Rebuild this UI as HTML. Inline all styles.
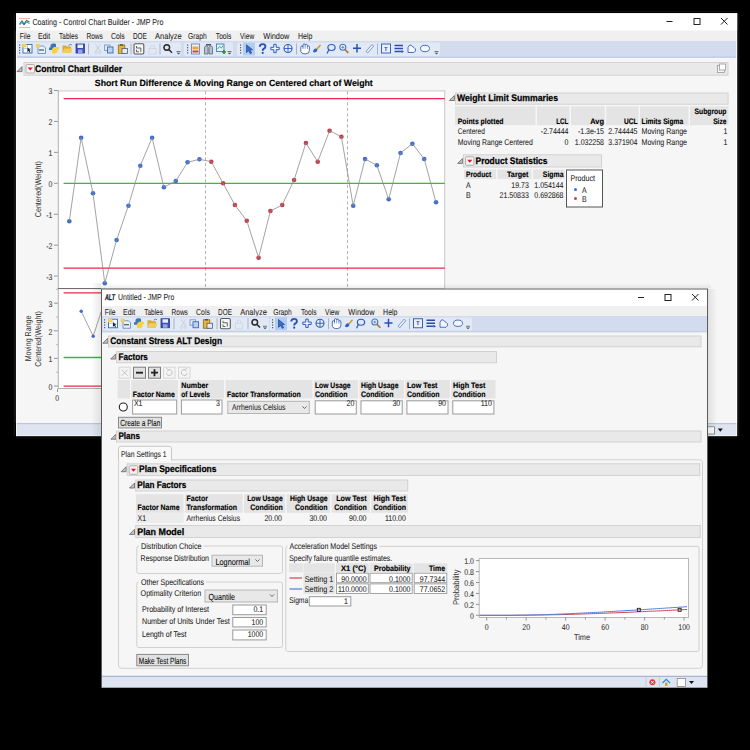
<!DOCTYPE html>
<html><head><meta charset="utf-8"><style>
html,body{margin:0;padding:0;background:#000;width:750px;height:750px;overflow:hidden}
svg{display:block}
text{font-family:"Liberation Sans",sans-serif;text-rendering:geometricPrecision}
</style></head><body>
<svg width="750" height="750" viewBox="0 0 750 750">
<rect x="0" y="0" width="750" height="750" fill="#000"/>
<rect x="16" y="13.2" width="721.2" height="423.0" fill="#f6f6f6"/>
<rect x="16" y="13.2" width="721.2" height="17.2" fill="#ffffff"/>
<line x1="14.3" y1="14" x2="14.3" y2="436" stroke="#1e1e1e" stroke-width="0.8"/>
<line x1="738.8" y1="14" x2="738.8" y2="436" stroke="#1e1e1e" stroke-width="0.8"/>
<line x1="16" y1="11.5" x2="737" y2="11.5" stroke="#151515" stroke-width="0.8"/>
<line x1="16" y1="438" x2="737" y2="438" stroke="#151515" stroke-width="0.8"/>
<line x1="16.4" y1="31" x2="16.4" y2="423" stroke="#ffffff" stroke-width="0.8"/>
<line x1="736.6" y1="31" x2="736.6" y2="423" stroke="#ffffff" stroke-width="0.8"/>
<path d="M19,18.5 L30,18.5 M19,27.5 L30,27.5" stroke="#f0a0a0" stroke-width="0.8"/>
<path d="M19.5,24 L22,21 L24,24 L26.5,20.5 L29.5,22" stroke="#1b8f3a" stroke-width="1.1" fill="none"/>
<path d="M19.5,25 L22,22.5 L24,25 L26.5,22 L29.5,23.5" stroke="#2a5cc0" stroke-width="0.9" fill="none"/>
<text x="32.40" y="25.00" font-size="8.6" textLength="131.00" lengthAdjust="spacingAndGlyphs" stroke="#1e1e1e" stroke-width="0.06" fill="#1e1e1e">Coating - Control Chart Builder - JMP Pro</text>
<line x1="666.5" y1="21.5" x2="672.5" y2="21.5" stroke="#222" stroke-width="1"/>
<rect x="694.0" y="18.5" width="6" height="6" fill="none" stroke="#222" stroke-width="1"/>
<path d="M721,18 L727.5,24.5 M727.5,18 L721,24.5" stroke="#222" stroke-width="1"/>
<rect x="17" y="30.7" width="719.2" height="10.2" fill="#f0f0f0"/>
<text x="19.70" y="39.40" font-size="8.6" textLength="10.70" lengthAdjust="spacingAndGlyphs" stroke="#1e1e1e" stroke-width="0.06" fill="#1e1e1e">File</text>
<text x="38.00" y="39.40" font-size="8.6" textLength="12.20" lengthAdjust="spacingAndGlyphs" stroke="#1e1e1e" stroke-width="0.06" fill="#1e1e1e">Edit</text>
<text x="59.10" y="39.40" font-size="8.6" textLength="18.80" lengthAdjust="spacingAndGlyphs" stroke="#1e1e1e" stroke-width="0.06" fill="#1e1e1e">Tables</text>
<text x="86.40" y="39.40" font-size="8.6" textLength="16.40" lengthAdjust="spacingAndGlyphs" stroke="#1e1e1e" stroke-width="0.06" fill="#1e1e1e">Rows</text>
<text x="111.00" y="39.40" font-size="8.6" textLength="13.80" lengthAdjust="spacingAndGlyphs" stroke="#1e1e1e" stroke-width="0.06" fill="#1e1e1e">Cols</text>
<text x="133.00" y="39.40" font-size="8.6" textLength="13.80" lengthAdjust="spacingAndGlyphs" stroke="#1e1e1e" stroke-width="0.06" fill="#1e1e1e">DOE</text>
<text x="155.10" y="39.40" font-size="8.6" textLength="26.60" lengthAdjust="spacingAndGlyphs" stroke="#1e1e1e" stroke-width="0.06" fill="#1e1e1e">Analyze</text>
<text x="188.10" y="39.40" font-size="8.6" textLength="18.60" lengthAdjust="spacingAndGlyphs" stroke="#1e1e1e" stroke-width="0.06" fill="#1e1e1e">Graph</text>
<text x="215.80" y="39.40" font-size="8.6" textLength="15.60" lengthAdjust="spacingAndGlyphs" stroke="#1e1e1e" stroke-width="0.06" fill="#1e1e1e">Tools</text>
<text x="240.00" y="39.40" font-size="8.6" textLength="14.20" lengthAdjust="spacingAndGlyphs" stroke="#1e1e1e" stroke-width="0.06" fill="#1e1e1e">View</text>
<text x="263.20" y="39.40" font-size="8.6" textLength="26.20" lengthAdjust="spacingAndGlyphs" stroke="#1e1e1e" stroke-width="0.06" fill="#1e1e1e">Window</text>
<text x="298.00" y="39.40" font-size="8.6" textLength="14.40" lengthAdjust="spacingAndGlyphs" stroke="#1e1e1e" stroke-width="0.06" fill="#1e1e1e">Help</text>
<rect x="17" y="40.9" width="719.2" height="16.3" fill="#d3dbef"/>
<line x1="17" y1="57.2" x2="736.2" y2="57.2" stroke="#b3c1de" stroke-width="1"/>
<rect x="17" y="42.5" width="164" height="13.5" fill="#e2e9f6" rx="2"/>
<rect x="184" y="42.5" width="49" height="13.5" fill="#e2e9f6" rx="2"/>
<rect x="237" y="42.5" width="203" height="13.5" fill="#e2e9f6" rx="2"/>
<rect x="16" y="41" width="0" height="0" fill="none"/>
<rect x="19" y="44.5" width="1.2" height="1.2" fill="#555"/>
<rect x="19" y="47.1" width="1.2" height="1.2" fill="#555"/>
<rect x="19" y="49.7" width="1.2" height="1.2" fill="#555"/>
<rect x="19" y="52.3" width="1.2" height="1.2" fill="#555"/>
<rect x="23.0" y="44.5" width="9" height="8.5" fill="#ffffff" stroke="#3a78c0" stroke-width="1"/>
<line x1="23.5" y1="48.5" x2="31.5" y2="48.5" stroke="#9dbde3" stroke-width="0.7"/>
<line x1="27.5" y1="45.0" x2="27.5" y2="52.5" stroke="#9dbde3" stroke-width="0.7"/>
<rect x="22.5" y="44.0" width="4" height="3.5" fill="#f3d25e"/>
<path d="M27.5,47.5 L27.5,52.0 L28.7,50.9 L29.9,52.7 L30.5,52.3 L29.5,50.5 L30.9,50.3 Z" fill="#222"/>
<path d="M38.0,46.0 L43.5,46.0 L45.5,48.0 L45.5,53.5 L38.0,53.5 Z" fill="#e8f0fa" stroke="#6a8fbf" stroke-width="0.9"/>
<rect x="35.8" y="44.0" width="4" height="3.5" fill="#f2cf62"/>
<line x1="39.0" y1="50.0" x2="44.0" y2="50.0" stroke="#444" stroke-width="1.1"/>
<path d="M54,43.5 C50,43.5 50.5,45.5 50.5,47.5 L49,47.5 L49,50.0 L54,50.0 L56,48.0 L56,44.5 C56,43.5 55,43.5 54,43.5 Z" fill="#3b77b6"/>
<path d="M54,53.5 C58,53.5 57.5,51.5 57.5,49.5 L59,49.5 L59,47.0 L54,47.0 L52,49.0 L52,52.5 C52,53.5 53,53.5 54,53.5 Z" fill="#f7d23d"/>
<path d="M62.5,45.5 L66.0,45.5 L67.0,46.5 L71.0,46.5 L71.0,53.0 L62.5,53.0 Z" fill="#d9a93a"/>
<path d="M64.0,48.5 L72.5,48.5 L71.0,53.0 L62.5,53.0 Z" fill="#f3cd5c"/>
<path d="M68.5,45.5 Q70.5,43.5 72.0,45.0" stroke="#4b7bc0" fill="none" stroke-width="0.9"/>
<rect x="76.0" y="44.0" width="8.5" height="9" fill="#3e4fb8" stroke="#2b3a8f" stroke-width="0.8"/>
<rect x="77.5" y="44.5" width="5.5" height="3.5" fill="#e8eefb"/>
<rect x="78.0" y="49.5" width="4.5" height="3.5" fill="#9aa6d8"/>
<line x1="88.5" y1="43.5" x2="88.5" y2="54.5" stroke="#a9b3c6" stroke-width="1"/>
<path d="M95.5,44.5 L100.5,51.5 M100.5,44.5 L95.5,51.5" stroke="#c9ced8" stroke-width="1" fill="none"/>
<circle cx="96.0" cy="52.5" r="1.3" fill="none" stroke="#c9ced8" stroke-width="0.8"/>
<circle cx="100.0" cy="52.5" r="1.3" fill="none" stroke="#c9ced8" stroke-width="0.8"/>
<rect x="104.5" y="45.0" width="5.5" height="5.5" fill="#e2ecf8" stroke="#7d9bc8" stroke-width="0.9"/>
<rect x="107.5" y="47.0" width="5.5" height="6" fill="#bcd3f0" stroke="#3f68b3" stroke-width="0.9"/>
<rect x="118.3" y="45.0" width="6.5" height="8.5" fill="#e7b731" stroke="#8e6a1a" stroke-width="0.8"/>
<rect x="120.0" y="44.2" width="3" height="1.6" fill="#555"/>
<rect x="122.0" y="48.5" width="5.5" height="5" fill="#e3ebf7" stroke="#505a70" stroke-width="0.8"/>
<line x1="131.0" y1="43.5" x2="131.0" y2="54.5" stroke="#a9b3c6" stroke-width="1"/>
<rect x="134.0" y="43.8" width="9.8" height="10.2" fill="#f6f6f6" stroke="#5a5a5a" stroke-width="1.1" rx="1.2"/>
<path d="M136.5,46.0 L136.5,48.0 L140.8,48.0 L140.8,51.8 M136.5,49.7 L136.5,51.8 L139.0,51.8" stroke="#555" stroke-width="0.9" fill="none"/>
<rect x="149.0" y="48.5" width="7" height="5.5" fill="none" stroke="#d0d4dc" stroke-width="0.9"/>
<path d="M150.5,48.5 L150.5,46.5 Q152.5,43.5 154.5,46.5 L154.5,48.5" stroke="#d0d4dc" fill="none" stroke-width="0.9"/>
<line x1="160.0" y1="43.5" x2="160.0" y2="54.5" stroke="#a9b3c6" stroke-width="1"/>
<circle cx="166.8" cy="47.5" r="2.8" fill="none" stroke="#2d2d2d" stroke-width="0.8"/>
<circle cx="166.8" cy="47.5" r="2.8" fill="none" stroke="#2d2d2d" stroke-width="1.4"/>
<line x1="169" y1="49.7" x2="172" y2="52.8" stroke="#2d2d2d" stroke-width="1.6"/>
<line x1="176.5" y1="51.5" x2="180.5" y2="51.5" stroke="#555" stroke-width="0.8"/>
<path d="M176.5,52.8 L180.5,52.8 L178.5,54.5 Z" fill="#555"/>
<rect x="187" y="44.5" width="1.2" height="1.2" fill="#555"/>
<rect x="187" y="47.1" width="1.2" height="1.2" fill="#555"/>
<rect x="187" y="49.7" width="1.2" height="1.2" fill="#555"/>
<rect x="187" y="52.3" width="1.2" height="1.2" fill="#555"/>
<rect x="191.5" y="44.0" width="8" height="10" fill="#f2f2f2" stroke="#6a86b5" stroke-width="0.9"/>
<rect x="192.5" y="46.5" width="6" height="3" fill="#f0a43a"/>
<rect x="192.5" y="50.5" width="6" height="2" fill="#c04848"/>
<path d="M204.5,47.5 Q204.5,46.0 206.3,46.0 Q208,46.0 208,47.5 L208,54.0 L204.5,54.0 Z" fill="#b8c2cf" stroke="#5c6678" stroke-width="0.8"/>
<path d="M209,47.5 Q209,46.0 210.8,46.0 Q212.5,46.0 212.5,47.5 L212.5,54.0 L209,54.0 Z" fill="#b8c2cf" stroke="#5c6678" stroke-width="0.8"/>
<line x1="206" y1="44.8" x2="211" y2="44.8" stroke="#2f3744" stroke-width="1.3"/>
<rect x="216.5" y="44.0" width="7.5" height="7.5" fill="#e6f0fa" stroke="#3d7fc1" stroke-width="0.9"/>
<path d="M217.5,49.0 L219.5,46.5 L221.5,48.0 L223,45.5" stroke="#2aa02a" stroke-width="0.8" fill="none"/>
<path d="M222,52.0 L226,52.0 M224,50.0 L224,54.0" stroke="#22a022" stroke-width="1.7"/>
<line x1="227.5" y1="51.5" x2="231.5" y2="51.5" stroke="#555" stroke-width="0.8"/>
<path d="M227.5,52.8 L231.5,52.8 L229.5,54.5 Z" fill="#555"/>
<rect x="240" y="44.5" width="1.2" height="1.2" fill="#555"/>
<rect x="240" y="47.1" width="1.2" height="1.2" fill="#555"/>
<rect x="240" y="49.7" width="1.2" height="1.2" fill="#555"/>
<rect x="240" y="52.3" width="1.2" height="1.2" fill="#555"/>
<rect x="243" y="42.5" width="12" height="13" fill="#b3cdf0"/>
<path d="M246.5,44.8 L246.5,52.7 L248.5,50.7 L250.3,53.7 L251.7,52.9 L250,50.1 L252.6,49.8 Z" fill="#3a6cc8" stroke="#1f4a9e" stroke-width="0.7" stroke-linejoin="round"/>
<path d="M259.8,46.7 Q259.8,44.1 262.6,44.1 Q265.4,44.1 265.4,46.5 Q265.4,48.1 263.6,48.8 Q262.7,49.3 262.7,50.8" fill="none" stroke="#2451b8" stroke-width="1.9"/>
<circle cx="262.7" cy="52.9" r="1.1" fill="#2451b8"/>
<path d="M273.8,44.3 L276.2,44.3 L276.2,47.3 L279.2,47.3 L279.2,49.7 L276.2,49.7 L276.2,52.7 L273.8,52.7 L273.8,49.7 L270.8,49.7 L270.8,47.3 L273.8,47.3 Z" fill="#eef3fb" stroke="#2f5cb8" stroke-width="1"/>
<circle cx="288.0" cy="48.5" r="4" fill="#e8effa" stroke="#2f5cb8" stroke-width="1.1"/>
<path d="M288.0,44.5 L288.0,52.5 M284.0,48.5 L292.0,48.5" stroke="#2f5cb8" stroke-width="0.9"/>
<line x1="296.5" y1="43.5" x2="296.5" y2="54.5" stroke="#a9b3c6" stroke-width="1"/>
<path d="M300.8,50.0 L300.8,47.3 Q300.8,46.0 301.9,46.0 Q303.0,46.0 303.0,47.3 L303.0,45.1 Q303.0,43.9 304.1,43.9 Q305.2,43.9 305.2,45.1 L305.2,45.4 Q305.2,44.3 306.3,44.3 Q307.4,44.3 307.4,45.5 L307.4,46.7 Q307.4,45.8 308.4,45.8 Q309.4,45.8 309.4,47.1 L309.4,50.5 Q309.4,53.8 305.8,53.8 L304.0,53.8 Q301.8,53.8 300.8,51.5 Z" fill="#ffffff" stroke="#3a5fa8" stroke-width="0.9"/>
<path d="M303.0,47.3 L303.0,49.0 M305.2,45.4 L305.2,48.7 M307.4,46.7 L307.4,49.0" stroke="#3a5fa8" stroke-width="0.6"/>
<path d="M313.0,52.0 Q313.5,48.0 316.5,48.5 L317.5,50.0 Q316.5,53.5 313.0,52.0 Z" fill="#2f62c6"/>
<line x1="317.0" y1="49.0" x2="320.5" y2="45.0" stroke="#d39a2a" stroke-width="1.6"/>
<ellipse cx="331.5" cy="47.5" rx="3.6" ry="3" fill="none" stroke="#2f5cb8" stroke-width="1.2"/>
<path d="M329.0,49.5 Q327.5,52.5 327.0,53.5" stroke="#2f5cb8" stroke-width="1.2" fill="none"/>
<circle cx="342.8" cy="47.3" r="3" fill="#eaf2fb" stroke="#4a78bf" stroke-width="1.1"/>
<line x1="345" y1="49.5" x2="348.3" y2="53.0" stroke="#b07a22" stroke-width="1.8"/>
<path d="M341.3,47.3 L344.3,47.3 M342.8,45.8 L342.8,48.8" stroke="#4a78bf" stroke-width="0.8"/>
<path d="M357,44.0 L357,52.5 M353,48.3 L361,48.3" stroke="#2451b8" stroke-width="1.5"/>
<path d="M366,51.5 L372,44.5 L373.7,46.0 L367.7,53.0 Z" fill="#f3f6fb" stroke="#6d8cc4" stroke-width="0.9"/>
<line x1="377.5" y1="43.5" x2="377.5" y2="54.5" stroke="#a9b3c6" stroke-width="1"/>
<rect x="381.5" y="44.0" width="9" height="9" fill="#e9f0fb" stroke="#3a62b3" stroke-width="1"/>
<text x="384" y="50.5" font-size="6" font-weight="bold" fill="#2a4f9e">T</text>
<path d="M394.5,45.5 L403.0,45.5 M394.5,48.5 L403.0,48.5 M394.5,51.5 L401.5,51.5" stroke="#2d4f9e" stroke-width="1.4"/>
<path d="M401.5,50.0 L404.0,51.5 L401.5,53.0 Z" fill="#2d4f9e"/>
<path d="M408,52.5 L408,47.5 Q409,44.5 411,45.0 Q412.5,47.0 414,47.5 Q416,48.5 415.5,51.0 L414,52.5 Z" fill="#f3f6fb" stroke="#3a62b3" stroke-width="0.9"/>
<ellipse cx="425" cy="48.5" rx="4.5" ry="3.2" fill="#f3f6fb" stroke="#3a62b3" stroke-width="0.9"/>
<line x1="434.5" y1="51.5" x2="438.5" y2="51.5" stroke="#555" stroke-width="0.8"/>
<path d="M434.5,52.8 L438.5,52.8 L436.5,54.5 Z" fill="#555"/>
<path d="M22.0,66.60000000000001 L22.0,71.60000000000001 L17.0,71.60000000000001 Z" fill="#c4c4c4" stroke="#6e6e6e" stroke-width="0.9" stroke-linejoin="round"/>
<rect x="24.0" y="62.5" width="704" height="12.7" fill="#e9e9e9" stroke="#d2d2d2" stroke-width="1"/>
<rect x="26.0" y="64.5" width="8.5" height="8.5" fill="#f2f2f2" stroke="#a9a9a9" stroke-width="0.9" rx="1"/>
<path d="M27.7,67.5 L32.8,67.5 L30.25,70.5 Z" fill="#d81a2e"/>
<text x="35.00" y="71.80" font-size="9.5" font-weight="bold" textLength="87.00" lengthAdjust="spacingAndGlyphs" stroke="#000" stroke-width="0.25" fill="#000">Control Chart Builder</text>
<rect x="717.5" y="65.5" width="7" height="7" fill="#f6f6f6" stroke="#9a9a9a" stroke-width="0.8"/>
<rect x="719.5" y="64" width="6" height="6" fill="#ffffff" stroke="#9a9a9a" stroke-width="0.8"/>
<text x="94.80" y="85.80" font-size="9" font-weight="bold" textLength="278.00" lengthAdjust="spacingAndGlyphs" stroke="#000" stroke-width="0.15" fill="#000">Short Run Difference &amp; Moving Range on Centered chart of Weight</text>
<rect x="57.8" y="90.4" width="387.4" height="198.1" fill="#ffffff"/>
<line x1="57.8" y1="90.9" x2="445.2" y2="90.9" stroke="#c6c6c6" stroke-width="1"/>
<line x1="444.7" y1="90.4" x2="444.7" y2="288.5" stroke="#c6c6c6" stroke-width="1"/>
<line x1="58.3" y1="90.4" x2="58.3" y2="288.5" stroke="#b0b0b0" stroke-width="1"/>
<line x1="54" y1="90.51000000000002" x2="57.8" y2="90.51000000000002" stroke="#8a8a8a" stroke-width="0.9"/>
<text x="48.61" y="94.31" font-size="8.4" textLength="3.89" lengthAdjust="spacingAndGlyphs" stroke="#333" stroke-width="0.06" fill="#333">3</text>
<line x1="54" y1="121.44000000000001" x2="57.8" y2="121.44000000000001" stroke="#8a8a8a" stroke-width="0.9"/>
<text x="48.61" y="125.24" font-size="8.4" textLength="3.89" lengthAdjust="spacingAndGlyphs" stroke="#333" stroke-width="0.06" fill="#333">2</text>
<line x1="54" y1="152.37" x2="57.8" y2="152.37" stroke="#8a8a8a" stroke-width="0.9"/>
<text x="48.61" y="156.17" font-size="8.4" textLength="3.89" lengthAdjust="spacingAndGlyphs" stroke="#333" stroke-width="0.06" fill="#333">1</text>
<line x1="54" y1="183.3" x2="57.8" y2="183.3" stroke="#8a8a8a" stroke-width="0.9"/>
<text x="48.61" y="187.10" font-size="8.4" textLength="3.89" lengthAdjust="spacingAndGlyphs" stroke="#333" stroke-width="0.06" fill="#333">0</text>
<line x1="54" y1="214.23000000000002" x2="57.8" y2="214.23000000000002" stroke="#8a8a8a" stroke-width="0.9"/>
<text x="46.28" y="218.03" font-size="8.4" textLength="6.22" lengthAdjust="spacingAndGlyphs" stroke="#333" stroke-width="0.06" fill="#333">-1</text>
<line x1="54" y1="245.16000000000003" x2="57.8" y2="245.16000000000003" stroke="#8a8a8a" stroke-width="0.9"/>
<text x="46.28" y="248.96" font-size="8.4" textLength="6.22" lengthAdjust="spacingAndGlyphs" stroke="#333" stroke-width="0.06" fill="#333">-2</text>
<line x1="54" y1="276.09000000000003" x2="57.8" y2="276.09000000000003" stroke="#8a8a8a" stroke-width="0.9"/>
<text x="46.28" y="279.89" font-size="8.4" textLength="6.22" lengthAdjust="spacingAndGlyphs" stroke="#333" stroke-width="0.06" fill="#333">-3</text>
<line x1="205.5" y1="91.4" x2="205.5" y2="288.5" stroke="#a8a8a8" stroke-width="0.9" stroke-dasharray="3,2.5"/>
<line x1="347.5" y1="91.4" x2="347.5" y2="288.5" stroke="#a8a8a8" stroke-width="0.9" stroke-dasharray="3,2.5"/>
<line x1="63.6" y1="98.6" x2="444.8" y2="98.6" stroke="#e8284a" stroke-width="1.3"/>
<line x1="63.6" y1="268.2" x2="444.8" y2="268.2" stroke="#e8284a" stroke-width="1.3"/>
<line x1="63.6" y1="183.4" x2="444.8" y2="183.4" stroke="#2fbf2f" stroke-width="1.3"/>
<circle cx="69.3" cy="221.3" r="2.3" fill="#3c6fd1"/>
<circle cx="81.13" cy="137.7" r="2.3" fill="#3c6fd1"/>
<circle cx="92.96" cy="193.3" r="2.3" fill="#3c6fd1"/>
<circle cx="104.78999999999999" cy="283.2" r="2.3" fill="#3c6fd1"/>
<circle cx="116.62" cy="240" r="2.3" fill="#3c6fd1"/>
<circle cx="128.45" cy="205.7" r="2.3" fill="#3c6fd1"/>
<circle cx="140.28" cy="165.7" r="2.3" fill="#3c6fd1"/>
<circle cx="152.11" cy="137.7" r="2.3" fill="#3c6fd1"/>
<circle cx="163.94" cy="187.3" r="2.3" fill="#3c6fd1"/>
<circle cx="175.76999999999998" cy="181" r="2.3" fill="#3c6fd1"/>
<circle cx="187.6" cy="162.3" r="2.3" fill="#3c6fd1"/>
<circle cx="199.43" cy="159.3" r="2.3" fill="#3c6fd1"/>
<circle cx="211.26" cy="161.7" r="2.3" fill="#c83a4e"/>
<circle cx="223.08999999999997" cy="183.3" r="2.3" fill="#c83a4e"/>
<circle cx="234.92000000000002" cy="205" r="2.3" fill="#c83a4e"/>
<circle cx="246.75" cy="220.7" r="2.3" fill="#c83a4e"/>
<circle cx="258.58" cy="257.7" r="2.3" fill="#c83a4e"/>
<circle cx="270.41" cy="211" r="2.3" fill="#c83a4e"/>
<circle cx="282.24" cy="205" r="2.3" fill="#c83a4e"/>
<circle cx="294.07" cy="180" r="2.3" fill="#c83a4e"/>
<circle cx="305.9" cy="143" r="2.3" fill="#c83a4e"/>
<circle cx="317.73" cy="161.7" r="2.3" fill="#c83a4e"/>
<circle cx="329.56" cy="130.7" r="2.3" fill="#c83a4e"/>
<circle cx="341.39" cy="136.7" r="2.3" fill="#c83a4e"/>
<circle cx="353.22" cy="205.7" r="2.3" fill="#3c6fd1"/>
<circle cx="365.05" cy="159" r="2.3" fill="#3c6fd1"/>
<circle cx="376.88" cy="165.3" r="2.3" fill="#3c6fd1"/>
<circle cx="388.71000000000004" cy="199.3" r="2.3" fill="#3c6fd1"/>
<circle cx="400.54" cy="153" r="2.3" fill="#3c6fd1"/>
<circle cx="412.37" cy="143.7" r="2.3" fill="#3c6fd1"/>
<circle cx="424.2" cy="159" r="2.3" fill="#3c6fd1"/>
<circle cx="436.03000000000003" cy="202.3" r="2.3" fill="#3c6fd1"/>
<polyline points="69.3,221.3 81.1,137.7 93.0,193.3 104.8,283.2 116.6,240.0 128.4,205.7 140.3,165.7 152.1,137.7 163.9,187.3 175.8,181.0 187.6,162.3 199.4,159.3 211.3,161.7 223.1,183.3 234.9,205.0 246.8,220.7 258.6,257.7 270.4,211.0 282.2,205.0 294.1,180.0 305.9,143.0 317.7,161.7 329.6,130.7 341.4,136.7 353.2,205.7 365.1,159.0 376.9,165.3 388.7,199.3 400.5,153.0 412.4,143.7 424.2,159.0 436.0,202.3" fill="none" stroke="#8c8c8c" stroke-width="0.8"/>
<text x="13.20" y="189.20" font-size="8.5" textLength="56.00" lengthAdjust="spacingAndGlyphs" transform="rotate(-90 41.20 189.20)" fill="#333">Centered(Weight)</text>
<line x1="57.8" y1="288.6" x2="445.2" y2="288.6" stroke="#6f6f6f" stroke-width="1.2"/>
<rect x="57.8" y="289.3" width="387.4" height="99.69999999999999" fill="#ffffff"/>
<line x1="58.3" y1="289.3" x2="58.3" y2="389" stroke="#b0b0b0" stroke-width="1"/>
<line x1="57.8" y1="388.5" x2="445.2" y2="388.5" stroke="#b0b0b0" stroke-width="1"/>
<line x1="54" y1="303.2" x2="57.8" y2="303.2" stroke="#8a8a8a" stroke-width="0.9"/>
<text x="48.61" y="307.00" font-size="8.4" textLength="3.89" lengthAdjust="spacingAndGlyphs" stroke="#333" stroke-width="0.06" fill="#333">3</text>
<line x1="54" y1="330.8" x2="57.8" y2="330.8" stroke="#8a8a8a" stroke-width="0.9"/>
<text x="48.61" y="334.60" font-size="8.4" textLength="3.89" lengthAdjust="spacingAndGlyphs" stroke="#333" stroke-width="0.06" fill="#333">2</text>
<line x1="54" y1="358.4" x2="57.8" y2="358.4" stroke="#8a8a8a" stroke-width="0.9"/>
<text x="48.61" y="362.20" font-size="8.4" textLength="3.89" lengthAdjust="spacingAndGlyphs" stroke="#333" stroke-width="0.06" fill="#333">1</text>
<line x1="54" y1="386.0" x2="57.8" y2="386.0" stroke="#8a8a8a" stroke-width="0.9"/>
<text x="48.61" y="389.80" font-size="8.4" textLength="3.89" lengthAdjust="spacingAndGlyphs" stroke="#333" stroke-width="0.06" fill="#333">0</text>
<line x1="56" y1="289.4" x2="57.8" y2="289.4" stroke="#a0a0a0" stroke-width="0.7"/>
<line x1="56" y1="317.0" x2="57.8" y2="317.0" stroke="#a0a0a0" stroke-width="0.7"/>
<line x1="56" y1="344.6" x2="57.8" y2="344.6" stroke="#a0a0a0" stroke-width="0.7"/>
<line x1="56" y1="372.2" x2="57.8" y2="372.2" stroke="#a0a0a0" stroke-width="0.7"/>
<line x1="57.5" y1="389" x2="57.5" y2="392" stroke="#8a8a8a" stroke-width="0.9"/>
<text x="55.35" y="401.10" font-size="8.4" textLength="3.89" lengthAdjust="spacingAndGlyphs" stroke="#333" stroke-width="0.06" fill="#333">0</text>
<line x1="63.6" y1="292.93544959999997" x2="444.8" y2="292.93544959999997" stroke="#e8284a" stroke-width="1.3"/>
<line x1="63.6" y1="357.5096792" x2="444.8" y2="357.5096792" stroke="#2fbf2f" stroke-width="1.3"/>
<line x1="63.6" y1="386.2" x2="444.8" y2="386.2" stroke="#e8284a" stroke-width="1.3"/>
<polyline points="81.2,311.3 93.2,336.2 105,300" fill="none" stroke="#9a9a9a" stroke-width="0.9"/>
<circle cx="81.2" cy="311.3" r="1.7" fill="#3c6fd1"/>
<circle cx="93.2" cy="336.2" r="1.7" fill="#3c6fd1"/>
<text x="8.50" y="338.40" font-size="8.5" textLength="45.80" lengthAdjust="spacingAndGlyphs" transform="rotate(-90 31.40 338.40)" fill="#333">Moving Range</text>
<text x="13.45" y="339.00" font-size="8.5" textLength="55.50" lengthAdjust="spacingAndGlyphs" transform="rotate(-90 41.20 339.00)" fill="#333">Centered(Weight)</text>
<path d="M454.4,95.5 L454.4,100.5 L449.4,100.5 Z" fill="#c4c4c4" stroke="#6e6e6e" stroke-width="0.9" stroke-linejoin="round"/>
<rect x="455.5" y="93.0" width="272.6" height="11.2" fill="#e9e9e9" stroke="#d2d2d2" stroke-width="1"/>
<text x="457.00" y="101.30" font-size="9.5" font-weight="bold" textLength="101.00" lengthAdjust="spacingAndGlyphs" stroke="#000" stroke-width="0.25" fill="#000">Weight Limit Summaries</text>
<rect x="455" y="106.3" width="80.5" height="18.900000000000006" fill="#e4e4e4"/>
<rect x="537" y="106.3" width="32.5" height="18.900000000000006" fill="#e4e4e4"/>
<rect x="571" y="106.3" width="33.799999999999955" height="18.900000000000006" fill="#e4e4e4"/>
<rect x="606.3" y="106.3" width="32.30000000000007" height="18.900000000000006" fill="#e4e4e4"/>
<rect x="640" y="106.3" width="48.60000000000002" height="18.900000000000006" fill="#e4e4e4"/>
<rect x="690" y="106.3" width="38.60000000000002" height="18.900000000000006" fill="#e4e4e4"/>
<text x="457.80" y="123.60" font-size="8" font-weight="bold" textLength="45.60" lengthAdjust="spacingAndGlyphs" stroke="#000" stroke-width="0.15" fill="#000">Points plotted</text>
<text x="556.30" y="123.60" font-size="8" font-weight="bold" textLength="12.00" lengthAdjust="spacingAndGlyphs" stroke="#000" stroke-width="0.15" fill="#000">LCL</text>
<text x="590.30" y="123.60" font-size="8" font-weight="bold" textLength="13.70" lengthAdjust="spacingAndGlyphs" stroke="#000" stroke-width="0.15" fill="#000">Avg</text>
<text x="624.00" y="123.60" font-size="8" font-weight="bold" textLength="13.50" lengthAdjust="spacingAndGlyphs" stroke="#000" stroke-width="0.15" fill="#000">UCL</text>
<text x="641.60" y="123.60" font-size="8" font-weight="bold" textLength="41.60" lengthAdjust="spacingAndGlyphs" stroke="#000" stroke-width="0.15" fill="#000">Limits Sigma</text>
<text x="694.50" y="113.80" font-size="8" font-weight="bold" textLength="32.00" lengthAdjust="spacingAndGlyphs" stroke="#000" stroke-width="0.15" fill="#000">Subgroup</text>
<text x="713.20" y="123.60" font-size="8" font-weight="bold" textLength="13.30" lengthAdjust="spacingAndGlyphs" stroke="#000" stroke-width="0.15" fill="#000">Size</text>
<text x="457.80" y="134.40" font-size="8.4" textLength="27.00" lengthAdjust="spacingAndGlyphs" stroke="#1c1c1c" stroke-width="0.06" fill="#1c1c1c">Centered</text>
<text x="540.87" y="134.40" font-size="8.4" textLength="27.63" lengthAdjust="spacingAndGlyphs" stroke="#1c1c1c" stroke-width="0.06" fill="#1c1c1c">-2.74444</text>
<text x="577.93" y="134.40" font-size="8.4" textLength="26.07" lengthAdjust="spacingAndGlyphs" stroke="#1c1c1c" stroke-width="0.06" fill="#1c1c1c">-1.3e-15</text>
<text x="608.30" y="134.40" font-size="8.4" textLength="29.20" lengthAdjust="spacingAndGlyphs" stroke="#1c1c1c" stroke-width="0.06" fill="#1c1c1c">2.744445</text>
<text x="641.50" y="134.40" font-size="8.4" textLength="45.50" lengthAdjust="spacingAndGlyphs" stroke="#1c1c1c" stroke-width="0.06" fill="#1c1c1c">Moving Range</text>
<text x="723.61" y="134.40" font-size="8.4" textLength="3.89" lengthAdjust="spacingAndGlyphs" stroke="#1c1c1c" stroke-width="0.06" fill="#1c1c1c">1</text>
<text x="457.80" y="144.60" font-size="8.4" textLength="75.00" lengthAdjust="spacingAndGlyphs" stroke="#1c1c1c" stroke-width="0.06" fill="#1c1c1c">Moving Range Centered</text>
<text x="564.61" y="144.60" font-size="8.4" textLength="3.89" lengthAdjust="spacingAndGlyphs" stroke="#1c1c1c" stroke-width="0.06" fill="#1c1c1c">0</text>
<text x="574.80" y="144.60" font-size="8.4" textLength="29.20" lengthAdjust="spacingAndGlyphs" stroke="#1c1c1c" stroke-width="0.06" fill="#1c1c1c">1.032258</text>
<text x="608.30" y="144.60" font-size="8.4" textLength="29.20" lengthAdjust="spacingAndGlyphs" stroke="#1c1c1c" stroke-width="0.06" fill="#1c1c1c">3.371904</text>
<text x="641.50" y="144.60" font-size="8.4" textLength="45.50" lengthAdjust="spacingAndGlyphs" stroke="#1c1c1c" stroke-width="0.06" fill="#1c1c1c">Moving Range</text>
<text x="723.61" y="144.60" font-size="8.4" textLength="3.89" lengthAdjust="spacingAndGlyphs" stroke="#1c1c1c" stroke-width="0.06" fill="#1c1c1c">1</text>
<path d="M462.7,158.39999999999998 L462.7,163.39999999999998 L457.7,163.39999999999998 Z" fill="#c4c4c4" stroke="#6e6e6e" stroke-width="0.9" stroke-linejoin="round"/>
<rect x="463.5" y="154.8" width="138" height="12.2" fill="#e9e9e9" stroke="#d2d2d2" stroke-width="1"/>
<rect x="465.5" y="156.8" width="8.5" height="8.5" fill="#f2f2f2" stroke="#a9a9a9" stroke-width="0.9" rx="1"/>
<path d="M467.2,159.8 L472.3,159.8 L469.75,162.8 Z" fill="#d81a2e"/>
<text x="475.50" y="164.00" font-size="9.5" font-weight="bold" textLength="72.00" lengthAdjust="spacingAndGlyphs" stroke="#000" stroke-width="0.25" fill="#000">Product Statistics</text>
<rect x="464" y="169.6" width="32" height="9.4" fill="#e4e4e4"/>
<rect x="497.5" y="169.6" width="34.0" height="9.4" fill="#e4e4e4"/>
<rect x="533" y="169.6" width="31.5" height="9.4" fill="#e4e4e4"/>
<text x="466.00" y="177.20" font-size="8" font-weight="bold" textLength="25.20" lengthAdjust="spacingAndGlyphs" stroke="#000" stroke-width="0.15" fill="#000">Product</text>
<text x="507.00" y="177.20" font-size="8" font-weight="bold" textLength="21.50" lengthAdjust="spacingAndGlyphs" stroke="#000" stroke-width="0.15" fill="#000">Target</text>
<text x="542.80" y="177.20" font-size="8" font-weight="bold" textLength="20.70" lengthAdjust="spacingAndGlyphs" stroke="#000" stroke-width="0.15" fill="#000">Sigma</text>
<text x="466.00" y="188.10" font-size="8.4" textLength="4.67" lengthAdjust="spacingAndGlyphs" stroke="#1c1c1c" stroke-width="0.06" fill="#1c1c1c">A</text>
<text x="511.28" y="188.10" font-size="8.4" textLength="17.52" lengthAdjust="spacingAndGlyphs" stroke="#1c1c1c" stroke-width="0.06" fill="#1c1c1c">19.73</text>
<text x="534.30" y="188.10" font-size="8.4" textLength="29.20" lengthAdjust="spacingAndGlyphs" stroke="#1c1c1c" stroke-width="0.06" fill="#1c1c1c">1.054144</text>
<text x="466.00" y="198.10" font-size="8.4" textLength="4.67" lengthAdjust="spacingAndGlyphs" stroke="#1c1c1c" stroke-width="0.06" fill="#1c1c1c">B</text>
<text x="499.60" y="198.10" font-size="8.4" textLength="29.20" lengthAdjust="spacingAndGlyphs" stroke="#1c1c1c" stroke-width="0.06" fill="#1c1c1c">21.50833</text>
<text x="534.30" y="198.10" font-size="8.4" textLength="29.20" lengthAdjust="spacingAndGlyphs" stroke="#1c1c1c" stroke-width="0.06" fill="#1c1c1c">0.692868</text>
<rect x="566.5" y="170" width="36" height="37" fill="#ffffff" stroke="#555555" stroke-width="1"/>
<text x="570.50" y="181.10" font-size="8.4" textLength="24.50" lengthAdjust="spacingAndGlyphs" stroke="#1c1c1c" stroke-width="0.06" fill="#1c1c1c">Product</text>
<circle cx="575.5" cy="189.5" r="1.5" fill="#3c6fd1"/>
<text x="582.00" y="192.90" font-size="8.4" textLength="4.67" lengthAdjust="spacingAndGlyphs" stroke="#1c1c1c" stroke-width="0.06" fill="#1c1c1c">A</text>
<circle cx="575.5" cy="198.5" r="1.5" fill="#d8374c"/>
<text x="582.00" y="201.90" font-size="8.4" textLength="4.67" lengthAdjust="spacingAndGlyphs" stroke="#1c1c1c" stroke-width="0.06" fill="#1c1c1c">B</text>
<line x1="17" y1="423.8" x2="736.2" y2="423.8" stroke="#aab3d6" stroke-width="1.2"/>
<rect x="17" y="424.5" width="719.2" height="11" fill="#dfe5f0"/>
<rect x="704.5" y="426.8" width="9.9" height="7.2" fill="#ffffff" stroke="#7a7a7a" stroke-width="0.8"/>
<path d="M717.8,428.5 L722.8,428.5 L720.3,431.7 Z" fill="#111"/>
<defs><linearGradient id="shL" x1="0" x2="1" y1="0" y2="0"><stop offset="0" stop-color="#000" stop-opacity="0"/><stop offset="1" stop-color="#000" stop-opacity="0.09"/></linearGradient><linearGradient id="shR" x1="0" x2="1" y1="0" y2="0"><stop offset="0" stop-color="#000" stop-opacity="0.09"/><stop offset="1" stop-color="#000" stop-opacity="0"/></linearGradient><linearGradient id="shT" x1="0" x2="0" y1="0" y2="1"><stop offset="0" stop-color="#000" stop-opacity="0"/><stop offset="1" stop-color="#000" stop-opacity="0.07"/></linearGradient></defs>
<rect x="91" y="283" width="10" height="405" fill="url(#shL)"/>
<rect x="708" y="289" width="9" height="399" fill="url(#shR)"/>
<rect x="101" y="283" width="610" height="5.5" fill="url(#shT)"/>
<rect x="101" y="288.5" width="607" height="399.5" fill="#f6f6f6"/>
<rect x="101" y="288.5" width="607" height="17.5" fill="#ffffff"/>
<rect x="101.5" y="289.0" width="606" height="398.5" fill="none" stroke="#5c5c5c" stroke-width="1"/>
<text x="105" y="299.8" font-size="8.5" font-weight="bold" font-style="italic" fill="#1d2733" stroke="#1d2733" stroke-width="0.3" textLength="10" lengthAdjust="spacingAndGlyphs">ALT</text>
<text x="118.00" y="300.40" font-size="8.6" textLength="56.30" lengthAdjust="spacingAndGlyphs" stroke="#1e1e1e" stroke-width="0.06" fill="#1e1e1e">Untitled - JMP Pro</text>
<line x1="638" y1="297.5" x2="644" y2="297.5" stroke="#222" stroke-width="1"/>
<rect x="665.0" y="294.5" width="6" height="6" fill="none" stroke="#222" stroke-width="1"/>
<path d="M692,294 L698.5,300.5 M698.5,294 L692,300.5" stroke="#222" stroke-width="1"/>
<rect x="102" y="306" width="605" height="10" fill="#f0f0f0"/>
<text x="104.80" y="314.50" font-size="8.6" textLength="10.70" lengthAdjust="spacingAndGlyphs" stroke="#1e1e1e" stroke-width="0.06" fill="#1e1e1e">File</text>
<text x="123.10" y="314.50" font-size="8.6" textLength="12.20" lengthAdjust="spacingAndGlyphs" stroke="#1e1e1e" stroke-width="0.06" fill="#1e1e1e">Edit</text>
<text x="144.20" y="314.50" font-size="8.6" textLength="18.80" lengthAdjust="spacingAndGlyphs" stroke="#1e1e1e" stroke-width="0.06" fill="#1e1e1e">Tables</text>
<text x="171.50" y="314.50" font-size="8.6" textLength="16.40" lengthAdjust="spacingAndGlyphs" stroke="#1e1e1e" stroke-width="0.06" fill="#1e1e1e">Rows</text>
<text x="196.10" y="314.50" font-size="8.6" textLength="13.80" lengthAdjust="spacingAndGlyphs" stroke="#1e1e1e" stroke-width="0.06" fill="#1e1e1e">Cols</text>
<text x="218.10" y="314.50" font-size="8.6" textLength="13.80" lengthAdjust="spacingAndGlyphs" stroke="#1e1e1e" stroke-width="0.06" fill="#1e1e1e">DOE</text>
<text x="240.20" y="314.50" font-size="8.6" textLength="26.60" lengthAdjust="spacingAndGlyphs" stroke="#1e1e1e" stroke-width="0.06" fill="#1e1e1e">Analyze</text>
<text x="273.20" y="314.50" font-size="8.6" textLength="18.60" lengthAdjust="spacingAndGlyphs" stroke="#1e1e1e" stroke-width="0.06" fill="#1e1e1e">Graph</text>
<text x="300.90" y="314.50" font-size="8.6" textLength="15.60" lengthAdjust="spacingAndGlyphs" stroke="#1e1e1e" stroke-width="0.06" fill="#1e1e1e">Tools</text>
<text x="325.10" y="314.50" font-size="8.6" textLength="14.20" lengthAdjust="spacingAndGlyphs" stroke="#1e1e1e" stroke-width="0.06" fill="#1e1e1e">View</text>
<text x="348.30" y="314.50" font-size="8.6" textLength="26.20" lengthAdjust="spacingAndGlyphs" stroke="#1e1e1e" stroke-width="0.06" fill="#1e1e1e">Window</text>
<text x="383.10" y="314.50" font-size="8.6" textLength="14.40" lengthAdjust="spacingAndGlyphs" stroke="#1e1e1e" stroke-width="0.06" fill="#1e1e1e">Help</text>
<rect x="102" y="316" width="605" height="15.5" fill="#d3dbef"/>
<line x1="102" y1="331.8" x2="707" y2="331.8" stroke="#b9c6e0" stroke-width="1"/>
<rect x="103" y="317.5" width="166" height="13" fill="#e2e9f6" rx="2"/>
<rect x="270" y="317.5" width="202" height="13" fill="#e2e9f6" rx="2"/>
<rect x="101" y="316" width="0" height="0" fill="none"/>
<rect x="104" y="319.25" width="1.2" height="1.2" fill="#555"/>
<rect x="104" y="321.85" width="1.2" height="1.2" fill="#555"/>
<rect x="104" y="324.45" width="1.2" height="1.2" fill="#555"/>
<rect x="104" y="327.05" width="1.2" height="1.2" fill="#555"/>
<rect x="108.5" y="319.25" width="9" height="8.5" fill="#ffffff" stroke="#3a78c0" stroke-width="1"/>
<line x1="109" y1="323.25" x2="117" y2="323.25" stroke="#9dbde3" stroke-width="0.7"/>
<line x1="113" y1="319.75" x2="113" y2="327.25" stroke="#9dbde3" stroke-width="0.7"/>
<rect x="108" y="318.75" width="4" height="3.5" fill="#f3d25e"/>
<path d="M113,322.25 L113,326.75 L114.2,325.65 L115.4,327.45 L116,327.05 L115,325.25 L116.4,325.05 Z" fill="#222"/>
<path d="M123.0,320.75 L128.5,320.75 L130.5,322.75 L130.5,328.25 L123.0,328.25 Z" fill="#e8f0fa" stroke="#6a8fbf" stroke-width="0.9"/>
<rect x="120.8" y="318.75" width="4" height="3.5" fill="#f2cf62"/>
<line x1="124.0" y1="324.75" x2="129.0" y2="324.75" stroke="#444" stroke-width="1.1"/>
<path d="M139,318.25 C135,318.25 135.5,320.25 135.5,322.25 L134,322.25 L134,324.75 L139,324.75 L141,322.75 L141,319.25 C141,318.25 140,318.25 139,318.25 Z" fill="#3b77b6"/>
<path d="M139,328.25 C143,328.25 142.5,326.25 142.5,324.25 L144,324.25 L144,321.75 L139,321.75 L137,323.75 L137,327.25 C137,328.25 138,328.25 139,328.25 Z" fill="#f7d23d"/>
<path d="M147.5,320.25 L151.0,320.25 L152.0,321.25 L156.0,321.25 L156.0,327.75 L147.5,327.75 Z" fill="#d9a93a"/>
<path d="M149.0,323.25 L157.5,323.25 L156.0,327.75 L147.5,327.75 Z" fill="#f3cd5c"/>
<path d="M153.5,320.25 Q155.5,318.25 157.0,319.75" stroke="#4b7bc0" fill="none" stroke-width="0.9"/>
<rect x="161.0" y="318.75" width="8.5" height="9" fill="#3e4fb8" stroke="#2b3a8f" stroke-width="0.8"/>
<rect x="162.5" y="319.25" width="5.5" height="3.5" fill="#e8eefb"/>
<rect x="163.0" y="324.25" width="4.5" height="3.5" fill="#9aa6d8"/>
<line x1="174.0" y1="318.25" x2="174.0" y2="329.25" stroke="#a9b3c6" stroke-width="1"/>
<path d="M181,319.25 L186,326.25 M186,319.25 L181,326.25" stroke="#c9ced8" stroke-width="1" fill="none"/>
<circle cx="181.5" cy="327.25" r="1.3" fill="none" stroke="#c9ced8" stroke-width="0.8"/>
<circle cx="185.5" cy="327.25" r="1.3" fill="none" stroke="#c9ced8" stroke-width="0.8"/>
<rect x="190.0" y="319.75" width="5.5" height="5.5" fill="#e2ecf8" stroke="#7d9bc8" stroke-width="0.9"/>
<rect x="193.0" y="321.75" width="5.5" height="6" fill="#bcd3f0" stroke="#3f68b3" stroke-width="0.9"/>
<rect x="203.3" y="319.75" width="6.5" height="8.5" fill="#e7b731" stroke="#8e6a1a" stroke-width="0.8"/>
<rect x="205.0" y="318.95" width="3" height="1.6" fill="#555"/>
<rect x="207.0" y="323.25" width="5.5" height="5" fill="#e3ebf7" stroke="#505a70" stroke-width="0.8"/>
<line x1="217.0" y1="318.25" x2="217.0" y2="329.25" stroke="#a9b3c6" stroke-width="1"/>
<rect x="220.5" y="318.55" width="9.8" height="10.2" fill="#f6f6f6" stroke="#5a5a5a" stroke-width="1.1" rx="1.2"/>
<path d="M223,320.75 L223,322.75 L227.3,322.75 L227.3,326.55 M223,324.45 L223,326.55 L225.5,326.55" stroke="#555" stroke-width="0.9" fill="none"/>
<rect x="235.5" y="323.25" width="7" height="5.5" fill="none" stroke="#d0d4dc" stroke-width="0.9"/>
<path d="M237,323.25 L237,321.25 Q239,318.25 241,321.25 L241,323.25" stroke="#d0d4dc" fill="none" stroke-width="0.9"/>
<line x1="248.0" y1="318.25" x2="248.0" y2="329.25" stroke="#a9b3c6" stroke-width="1"/>
<circle cx="254.8" cy="322.25" r="2.8" fill="none" stroke="#2d2d2d" stroke-width="0.8"/>
<circle cx="254.8" cy="322.25" r="2.8" fill="none" stroke="#2d2d2d" stroke-width="1.4"/>
<line x1="257" y1="324.45" x2="260" y2="327.55" stroke="#2d2d2d" stroke-width="1.6"/>
<line x1="263" y1="326.25" x2="267" y2="326.25" stroke="#555" stroke-width="0.8"/>
<path d="M263,327.55 L267,327.55 L265,329.25 Z" fill="#555"/>
<rect x="272" y="319.25" width="1.2" height="1.2" fill="#555"/>
<rect x="272" y="321.85" width="1.2" height="1.2" fill="#555"/>
<rect x="272" y="324.45" width="1.2" height="1.2" fill="#555"/>
<rect x="272" y="327.05" width="1.2" height="1.2" fill="#555"/>
<rect x="275" y="317.25" width="12" height="13" fill="#b3cdf0"/>
<path d="M278.5,319.55 L278.5,327.45 L280.5,325.45 L282.3,328.45 L283.7,327.65 L282,324.85 L284.6,324.55 Z" fill="#3a6cc8" stroke="#1f4a9e" stroke-width="0.7" stroke-linejoin="round"/>
<path d="M291.3,321.45 Q291.3,318.85 294.1,318.85 Q296.9,318.85 296.9,321.25 Q296.9,322.85 295.1,323.55 Q294.2,324.05 294.2,325.55" fill="none" stroke="#2451b8" stroke-width="1.9"/>
<circle cx="294.2" cy="327.65" r="1.1" fill="#2451b8"/>
<path d="M305.8,319.05 L308.2,319.05 L308.2,322.05 L311.2,322.05 L311.2,324.45 L308.2,324.45 L308.2,327.45 L305.8,327.45 L305.8,324.45 L302.8,324.45 L302.8,322.05 L305.8,322.05 Z" fill="#eef3fb" stroke="#2f5cb8" stroke-width="1"/>
<circle cx="320.0" cy="323.25" r="4" fill="#e8effa" stroke="#2f5cb8" stroke-width="1.1"/>
<path d="M320.0,319.25 L320.0,327.25 M316.0,323.25 L324.0,323.25" stroke="#2f5cb8" stroke-width="0.9"/>
<line x1="328.5" y1="318.25" x2="328.5" y2="329.25" stroke="#a9b3c6" stroke-width="1"/>
<path d="M332.3,324.75 L332.3,322.05 Q332.3,320.75 333.4,320.75 Q334.5,320.75 334.5,322.05 L334.5,319.85 Q334.5,318.65 335.6,318.65 Q336.7,318.65 336.7,319.85 L336.7,320.15 Q336.7,319.05 337.8,319.05 Q338.9,319.05 338.9,320.25 L338.9,321.45 Q338.9,320.55 339.9,320.55 Q340.9,320.55 340.9,321.85 L340.9,325.25 Q340.9,328.55 337.3,328.55 L335.5,328.55 Q333.3,328.55 332.3,326.25 Z" fill="#ffffff" stroke="#3a5fa8" stroke-width="0.9"/>
<path d="M334.5,322.05 L334.5,323.75 M336.7,320.15 L336.7,323.45 M338.9,321.45 L338.9,323.75" stroke="#3a5fa8" stroke-width="0.6"/>
<path d="M345.0,326.75 Q345.5,322.75 348.5,323.25 L349.5,324.75 Q348.5,328.25 345.0,326.75 Z" fill="#2f62c6"/>
<line x1="349.0" y1="323.75" x2="352.5" y2="319.75" stroke="#d39a2a" stroke-width="1.6"/>
<ellipse cx="361" cy="322.25" rx="3.6" ry="3" fill="none" stroke="#2f5cb8" stroke-width="1.2"/>
<path d="M358.5,324.25 Q357,327.25 356.5,328.25" stroke="#2f5cb8" stroke-width="1.2" fill="none"/>
<circle cx="374.8" cy="322.05" r="3" fill="#eaf2fb" stroke="#4a78bf" stroke-width="1.1"/>
<line x1="377" y1="324.25" x2="380.3" y2="327.75" stroke="#b07a22" stroke-width="1.8"/>
<path d="M373.3,322.05 L376.3,322.05 M374.8,320.55 L374.8,323.55" stroke="#4a78bf" stroke-width="0.8"/>
<path d="M388.5,318.75 L388.5,327.25 M384.5,323.05 L392.5,323.05" stroke="#2451b8" stroke-width="1.5"/>
<path d="M398,326.25 L404,319.25 L405.7,320.75 L399.7,327.75 Z" fill="#f3f6fb" stroke="#6d8cc4" stroke-width="0.9"/>
<line x1="409.5" y1="318.25" x2="409.5" y2="329.25" stroke="#a9b3c6" stroke-width="1"/>
<rect x="413.5" y="318.75" width="9" height="9" fill="#e9f0fb" stroke="#3a62b3" stroke-width="1"/>
<text x="416" y="325.25" font-size="6" font-weight="bold" fill="#2a4f9e">T</text>
<path d="M426.5,320.25 L435.0,320.25 M426.5,323.25 L435.0,323.25 M426.5,326.25 L433.5,326.25" stroke="#2d4f9e" stroke-width="1.4"/>
<path d="M433.5,324.75 L436.0,326.25 L433.5,327.75 Z" fill="#2d4f9e"/>
<path d="M440,327.25 L440,322.25 Q441,319.25 443,319.75 Q444.5,321.75 446,322.25 Q448,323.25 447.5,325.75 L446,327.25 Z" fill="#f3f6fb" stroke="#3a62b3" stroke-width="0.9"/>
<ellipse cx="458" cy="323.25" rx="4.5" ry="3.2" fill="#f3f6fb" stroke="#3a62b3" stroke-width="0.9"/>
<line x1="466" y1="326.25" x2="470" y2="326.25" stroke="#555" stroke-width="0.8"/>
<path d="M466,327.55 L470,327.55 L468,329.25 Z" fill="#555"/>
<path d="M107.8,338.2 L107.8,343.2 L102.8,343.2 Z" fill="#c4c4c4" stroke="#6e6e6e" stroke-width="0.9" stroke-linejoin="round"/>
<rect x="108.5" y="336.0" width="592.5" height="10.8" fill="#e9e9e9" stroke="#d2d2d2" stroke-width="1"/>
<text x="110.20" y="343.60" font-size="9.5" font-weight="bold" textLength="111.80" lengthAdjust="spacingAndGlyphs" stroke="#000" stroke-width="0.25" fill="#000">Constant Stress ALT Design</text>
<path d="M115.7,354.0 L115.7,359.0 L110.7,359.0 Z" fill="#c4c4c4" stroke="#6e6e6e" stroke-width="0.9" stroke-linejoin="round"/>
<rect x="116.5" y="351.5" width="380" height="11.2" fill="#e9e9e9" stroke="#d2d2d2" stroke-width="1"/>
<text x="118.50" y="359.60" font-size="9.5" font-weight="bold" textLength="29.30" lengthAdjust="spacingAndGlyphs" stroke="#000" stroke-width="0.25" fill="#000">Factors</text>
<rect x="119.0" y="367.2" width="11.2" height="11" fill="#f4f4f4" stroke="#d6d6d6" stroke-width="1"/>
<path d="M121.6,369.7 L127.6,375.7 M127.6,369.7 L121.6,375.7" stroke="#c4c4c4" stroke-width="1"/>
<rect x="133.5" y="367.2" width="12" height="11" fill="#e1e1e1" stroke="#7d7d7d" stroke-width="1"/>
<line x1="136.0" y1="372.7" x2="143.0" y2="372.7" stroke="#222" stroke-width="1.9"/>
<rect x="148.5" y="367.2" width="12" height="11" fill="#e1e1e1" stroke="#7d7d7d" stroke-width="1"/>
<path d="M151.0,372.7 L158.0,372.7 M154.5,369.2 L154.5,376.2" stroke="#222" stroke-width="1.8"/>
<rect x="163.5" y="367.2" width="11.5" height="11" fill="#f4f4f4" stroke="#d6d6d6" stroke-width="1"/>
<path d="M168.25,369.7 A3,3 0 1 1 166.25,373.2" fill="none" stroke="#c4c4c4" stroke-width="1"/>
<path d="M166.45,368.4 L168.95,369.7 L166.95,371.4" fill="none" stroke="#c4c4c4" stroke-width="0.9"/>
<rect x="178.5" y="367.2" width="11.5" height="11" fill="#f4f4f4" stroke="#d6d6d6" stroke-width="1"/>
<path d="M185.25,369.7 A3,3 0 1 0 187.25,373.2" fill="none" stroke="#c4c4c4" stroke-width="1"/>
<path d="M187.05,368.4 L184.55,369.7 L186.55,371.4" fill="none" stroke="#c4c4c4" stroke-width="0.9"/>
<rect x="117.5" y="380" width="12.5" height="18.5" fill="#e4e4e4"/>
<rect x="131.3" y="380" width="46.69999999999999" height="18.5" fill="#e4e4e4"/>
<rect x="179.9" y="380" width="44.099999999999994" height="18.5" fill="#e4e4e4"/>
<rect x="225.5" y="380" width="87.0" height="18.5" fill="#e4e4e4"/>
<rect x="313.9" y="380" width="44.10000000000002" height="18.5" fill="#e4e4e4"/>
<rect x="359.5" y="380" width="44.5" height="18.5" fill="#e4e4e4"/>
<rect x="405.3" y="380" width="44.599999999999966" height="18.5" fill="#e4e4e4"/>
<rect x="451.2" y="380" width="44.30000000000001" height="18.5" fill="#e4e4e4"/>
<text x="132.70" y="397.10" font-size="8" font-weight="bold" textLength="42.10" lengthAdjust="spacingAndGlyphs" stroke="#000" stroke-width="0.15" fill="#000">Factor Name</text>
<text x="181.30" y="387.80" font-size="8" font-weight="bold" textLength="27.00" lengthAdjust="spacingAndGlyphs" stroke="#000" stroke-width="0.15" fill="#000">Number</text>
<text x="181.30" y="397.10" font-size="8" font-weight="bold" textLength="28.70" lengthAdjust="spacingAndGlyphs" stroke="#000" stroke-width="0.15" fill="#000">of Levels</text>
<text x="227.00" y="397.10" font-size="8" font-weight="bold" textLength="73.70" lengthAdjust="spacingAndGlyphs" stroke="#000" stroke-width="0.15" fill="#000">Factor Transformation</text>
<text x="315.00" y="387.80" font-size="8" font-weight="bold" textLength="35.50" lengthAdjust="spacingAndGlyphs" stroke="#000" stroke-width="0.15" fill="#000">Low Usage</text>
<text x="315.00" y="397.10" font-size="8" font-weight="bold" textLength="32.50" lengthAdjust="spacingAndGlyphs" stroke="#000" stroke-width="0.15" fill="#000">Condition</text>
<text x="361.00" y="387.80" font-size="8" font-weight="bold" textLength="37.50" lengthAdjust="spacingAndGlyphs" stroke="#000" stroke-width="0.15" fill="#000">High Usage</text>
<text x="361.00" y="397.10" font-size="8" font-weight="bold" textLength="32.50" lengthAdjust="spacingAndGlyphs" stroke="#000" stroke-width="0.15" fill="#000">Condition</text>
<text x="407.00" y="387.80" font-size="8" font-weight="bold" textLength="30.50" lengthAdjust="spacingAndGlyphs" stroke="#000" stroke-width="0.15" fill="#000">Low Test</text>
<text x="407.00" y="397.10" font-size="8" font-weight="bold" textLength="32.50" lengthAdjust="spacingAndGlyphs" stroke="#000" stroke-width="0.15" fill="#000">Condition</text>
<text x="453.00" y="387.80" font-size="8" font-weight="bold" textLength="32.50" lengthAdjust="spacingAndGlyphs" stroke="#000" stroke-width="0.15" fill="#000">High Test</text>
<text x="453.00" y="397.10" font-size="8" font-weight="bold" textLength="32.50" lengthAdjust="spacingAndGlyphs" stroke="#000" stroke-width="0.15" fill="#000">Condition</text>
<circle cx="123.3" cy="407" r="4" fill="#ffffff" stroke="#222" stroke-width="1.1"/>
<rect x="132.6" y="400.0" width="44.099999999999994" height="14.0" fill="#ffffff" stroke="#9a9a9a" stroke-width="1"/>
<text x="133.90" y="406.40" font-size="8.4" textLength="8.56" lengthAdjust="spacingAndGlyphs" stroke="#1c1c1c" stroke-width="0.06" fill="#1c1c1c">X1</text>
<rect x="181.4" y="400.0" width="40.599999999999994" height="14.0" fill="#ffffff" stroke="#9a9a9a" stroke-width="1"/>
<text x="216.11" y="406.40" font-size="8.4" textLength="3.89" lengthAdjust="spacingAndGlyphs" stroke="#1c1c1c" stroke-width="0.06" fill="#1c1c1c">3</text>
<rect x="227.8" y="401.3" width="81.5" height="12.2" fill="#e8e8e8" stroke="#b5b5b5" stroke-width="1"/>
<text x="231.90" y="410.40" font-size="8.4" textLength="53.60" lengthAdjust="spacingAndGlyphs" stroke="#1c1c1c" stroke-width="0.06" fill="#1c1c1c">Arrhenius Celsius</text>
<path d="M302.5,406.5 L304.5,408.5 L306.5,406.5" fill="none" stroke="#555" stroke-width="0.9"/>
<rect x="315.2" y="400.8" width="41.10000000000002" height="13.199999999999989" fill="#ffffff" stroke="#9a9a9a" stroke-width="1"/>
<text x="346.51" y="406.40" font-size="8.4" textLength="7.79" lengthAdjust="spacingAndGlyphs" stroke="#1c1c1c" stroke-width="0.06" fill="#1c1c1c">20</text>
<rect x="361.0" y="400.8" width="41.19999999999999" height="13.199999999999989" fill="#ffffff" stroke="#9a9a9a" stroke-width="1"/>
<text x="392.41" y="406.40" font-size="8.4" textLength="7.79" lengthAdjust="spacingAndGlyphs" stroke="#1c1c1c" stroke-width="0.06" fill="#1c1c1c">30</text>
<rect x="406.9" y="400.8" width="41.10000000000002" height="13.199999999999989" fill="#ffffff" stroke="#9a9a9a" stroke-width="1"/>
<text x="438.21" y="406.40" font-size="8.4" textLength="7.79" lengthAdjust="spacingAndGlyphs" stroke="#1c1c1c" stroke-width="0.06" fill="#1c1c1c">90</text>
<rect x="452.8" y="400.8" width="41.099999999999966" height="13.199999999999989" fill="#ffffff" stroke="#9a9a9a" stroke-width="1"/>
<text x="480.74" y="406.40" font-size="8.4" textLength="11.16" lengthAdjust="spacingAndGlyphs" stroke="#1c1c1c" stroke-width="0.06" fill="#1c1c1c">110</text>
<rect x="118.5" y="417.3" width="43" height="10.6" fill="#e1e1e1" stroke="#8a8a8a" stroke-width="1"/>
<text x="120.30" y="426.20" font-size="9" textLength="40.00" lengthAdjust="spacingAndGlyphs" stroke="#000" stroke-width="0.06" fill="#000">Create a Plan</text>
<path d="M116.0,434.2 L116.0,439.2 L111.0,439.2 Z" fill="#c4c4c4" stroke="#6e6e6e" stroke-width="0.9" stroke-linejoin="round"/>
<rect x="116.5" y="431.0" width="584.5" height="11" fill="#e9e9e9" stroke="#d2d2d2" stroke-width="1"/>
<text x="118.50" y="439.40" font-size="9.5" font-weight="bold" textLength="21.50" lengthAdjust="spacingAndGlyphs" stroke="#000" stroke-width="0.25" fill="#000">Plans</text>
<rect x="118.5" y="459.8" width="584" height="208.5" fill="#f6f6f6" stroke="#d2d2d2" stroke-width="1" rx="3"/>
<path d="M118.5,461 L118.5,448.5 Q118.5,446.3 120.7,446.3 L169.3,446.3 Q171.5,446.3 171.5,448.5 L171.5,460.3" fill="#f9f9f9" stroke="#c8c8c8" stroke-width="1"/>
<rect x="119" y="459.3" width="52" height="2" fill="#f9f9f9"/>
<text x="121.00" y="457.10" font-size="8.4" textLength="45.50" lengthAdjust="spacingAndGlyphs" stroke="#1c1c1c" stroke-width="0.06" fill="#1c1c1c">Plan Settings 1</text>
<path d="M126.2,466.7 L126.2,471.7 L121.2,471.7 Z" fill="#c4c4c4" stroke="#6e6e6e" stroke-width="0.9" stroke-linejoin="round"/>
<rect x="127.2" y="463.8" width="572.5" height="11.7" fill="#e9e9e9" stroke="#d2d2d2" stroke-width="1"/>
<rect x="129.2" y="465.8" width="8.5" height="8.5" fill="#f2f2f2" stroke="#a9a9a9" stroke-width="0.9" rx="1"/>
<path d="M130.89999999999998,468.8 L136.0,468.8 L133.45,471.8 Z" fill="#d81a2e"/>
<text x="139.00" y="472.40" font-size="9.5" font-weight="bold" textLength="77.50" lengthAdjust="spacingAndGlyphs" stroke="#000" stroke-width="0.25" fill="#000">Plan Specifications</text>
<path d="M134.5,483.0 L134.5,488.0 L129.5,488.0 Z" fill="#c4c4c4" stroke="#6e6e6e" stroke-width="0.9" stroke-linejoin="round"/>
<rect x="135.7" y="480.0" width="272" height="11" fill="#e9e9e9" stroke="#d2d2d2" stroke-width="1"/>
<text x="137.20" y="488.30" font-size="9.5" font-weight="bold" textLength="49.00" lengthAdjust="spacingAndGlyphs" stroke="#000" stroke-width="0.25" fill="#000">Plan Factors</text>
<rect x="136" y="494.2" width="47.599999999999994" height="18.6" fill="#e4e4e4"/>
<rect x="185" y="494.2" width="57.80000000000001" height="18.6" fill="#e4e4e4"/>
<rect x="244" y="494.2" width="41" height="18.6" fill="#e4e4e4"/>
<rect x="286.5" y="494.2" width="43.5" height="18.6" fill="#e4e4e4"/>
<rect x="331.6" y="494.2" width="38.19999999999999" height="18.6" fill="#e4e4e4"/>
<rect x="371.3" y="494.2" width="36.69999999999999" height="18.6" fill="#e4e4e4"/>
<text x="137.50" y="510.30" font-size="8" font-weight="bold" textLength="42.00" lengthAdjust="spacingAndGlyphs" stroke="#000" stroke-width="0.15" fill="#000">Factor Name</text>
<text x="186.50" y="500.80" font-size="8" font-weight="bold" textLength="21.50" lengthAdjust="spacingAndGlyphs" stroke="#000" stroke-width="0.15" fill="#000">Factor</text>
<text x="186.50" y="510.30" font-size="8" font-weight="bold" textLength="50.50" lengthAdjust="spacingAndGlyphs" stroke="#000" stroke-width="0.15" fill="#000">Transformation</text>
<text x="247.20" y="500.80" font-size="8" font-weight="bold" textLength="35.50" lengthAdjust="spacingAndGlyphs" stroke="#000" stroke-width="0.15" fill="#000">Low Usage</text>
<text x="250.20" y="510.30" font-size="8" font-weight="bold" textLength="32.50" lengthAdjust="spacingAndGlyphs" stroke="#000" stroke-width="0.15" fill="#000">Condition</text>
<text x="290.10" y="500.80" font-size="8" font-weight="bold" textLength="37.50" lengthAdjust="spacingAndGlyphs" stroke="#000" stroke-width="0.15" fill="#000">High Usage</text>
<text x="295.10" y="510.30" font-size="8" font-weight="bold" textLength="32.50" lengthAdjust="spacingAndGlyphs" stroke="#000" stroke-width="0.15" fill="#000">Condition</text>
<text x="336.20" y="500.80" font-size="8" font-weight="bold" textLength="30.50" lengthAdjust="spacingAndGlyphs" stroke="#000" stroke-width="0.15" fill="#000">Low Test</text>
<text x="334.20" y="510.30" font-size="8" font-weight="bold" textLength="32.50" lengthAdjust="spacingAndGlyphs" stroke="#000" stroke-width="0.15" fill="#000">Condition</text>
<text x="373.50" y="500.80" font-size="8" font-weight="bold" textLength="32.50" lengthAdjust="spacingAndGlyphs" stroke="#000" stroke-width="0.15" fill="#000">High Test</text>
<text x="373.50" y="510.30" font-size="8" font-weight="bold" textLength="32.50" lengthAdjust="spacingAndGlyphs" stroke="#000" stroke-width="0.15" fill="#000">Condition</text>
<rect x="136" y="513" width="47.6" height="10" fill="#ececec"/>
<text x="137.50" y="521.40" font-size="8.4" textLength="8.56" lengthAdjust="spacingAndGlyphs" stroke="#1c1c1c" stroke-width="0.06" fill="#1c1c1c">X1</text>
<text x="186.50" y="521.40" font-size="8.4" textLength="53.60" lengthAdjust="spacingAndGlyphs" stroke="#1c1c1c" stroke-width="0.06" fill="#1c1c1c">Arrhenius Celsius</text>
<text x="264.48" y="521.40" font-size="8.4" textLength="17.52" lengthAdjust="spacingAndGlyphs" stroke="#1c1c1c" stroke-width="0.06" fill="#1c1c1c">20.00</text>
<text x="309.48" y="521.40" font-size="8.4" textLength="17.52" lengthAdjust="spacingAndGlyphs" stroke="#1c1c1c" stroke-width="0.06" fill="#1c1c1c">30.00</text>
<text x="348.98" y="521.40" font-size="8.4" textLength="17.52" lengthAdjust="spacingAndGlyphs" stroke="#1c1c1c" stroke-width="0.06" fill="#1c1c1c">90.00</text>
<text x="384.91" y="521.40" font-size="8.4" textLength="20.89" lengthAdjust="spacingAndGlyphs" stroke="#1c1c1c" stroke-width="0.06" fill="#1c1c1c">110.00</text>
<path d="M134.5,529.4000000000001 L134.5,534.4000000000001 L129.5,534.4000000000001 Z" fill="#c4c4c4" stroke="#6e6e6e" stroke-width="0.9" stroke-linejoin="round"/>
<rect x="135.7" y="525.5" width="564.5" height="12" fill="#e9e9e9" stroke="#d2d2d2" stroke-width="1"/>
<text x="137.20" y="534.80" font-size="9.5" font-weight="bold" textLength="47.00" lengthAdjust="spacingAndGlyphs" stroke="#000" stroke-width="0.25" fill="#000">Plan Model</text>
<rect x="136.8" y="546.0" width="145.7" height="27.5" rx="2" fill="none" stroke="#d0d0d0" stroke-width="1"/>
<rect x="139" y="542.5" width="64.6" height="6" fill="#f6f6f6"/>
<text x="141.00" y="548.70" font-size="8.4" textLength="60.60" lengthAdjust="spacingAndGlyphs" stroke="#1c1c1c" stroke-width="0.06" fill="#1c1c1c">Distribution Choice</text>
<text x="140.60" y="560.80" font-size="8.4" textLength="68.40" lengthAdjust="spacingAndGlyphs" stroke="#1c1c1c" stroke-width="0.06" fill="#1c1c1c">Response Distribution</text>
<rect x="212" y="555.2" width="50.5" height="11" fill="#e8e8e8" stroke="#b5b5b5" stroke-width="1"/>
<text x="215.50" y="564.60" font-size="9" textLength="34.50" lengthAdjust="spacingAndGlyphs" stroke="#000" stroke-width="0.06" fill="#000">Lognormal</text>
<path d="M255.5,559.5 L257.5,561.5 L259.5,559.5" fill="none" stroke="#555" stroke-width="0.9"/>
<rect x="136.8" y="582.0" width="145.7" height="65.5" rx="2" fill="none" stroke="#d0d0d0" stroke-width="1"/>
<rect x="139" y="578.5" width="67" height="6" fill="#f6f6f6"/>
<text x="141.00" y="584.70" font-size="8.4" textLength="63.00" lengthAdjust="spacingAndGlyphs" stroke="#1c1c1c" stroke-width="0.06" fill="#1c1c1c">Other Specifications</text>
<text x="140.60" y="595.80" font-size="8.4" textLength="60.50" lengthAdjust="spacingAndGlyphs" stroke="#1c1c1c" stroke-width="0.06" fill="#1c1c1c">Optimality Criterion</text>
<rect x="205" y="590" width="72.4" height="12" fill="#e8e8e8" stroke="#b5b5b5" stroke-width="1"/>
<text x="208.60" y="599.60" font-size="9" textLength="26.40" lengthAdjust="spacingAndGlyphs" stroke="#000" stroke-width="0.06" fill="#000">Quantile</text>
<path d="M270,594.5 L272,596.5 L274,594.5" fill="none" stroke="#555" stroke-width="0.9"/>
<text x="142.00" y="611.90" font-size="8.4" textLength="67.00" lengthAdjust="spacingAndGlyphs" stroke="#1c1c1c" stroke-width="0.06" fill="#1c1c1c">Probability of Interest</text>
<text x="142.00" y="624.40" font-size="8.4" textLength="87.70" lengthAdjust="spacingAndGlyphs" stroke="#1c1c1c" stroke-width="0.06" fill="#1c1c1c">Number of Units Under Test</text>
<text x="142.00" y="636.90" font-size="8.4" textLength="44.50" lengthAdjust="spacingAndGlyphs" stroke="#1c1c1c" stroke-width="0.06" fill="#1c1c1c">Length of Test</text>
<rect x="232.8" y="605.0" width="33.39999999999998" height="9.700000000000045" fill="#ffffff" stroke="#9a9a9a" stroke-width="1"/>
<text x="253.47" y="612.40" font-size="8.4" textLength="9.73" lengthAdjust="spacingAndGlyphs" stroke="#1c1c1c" stroke-width="0.06" fill="#1c1c1c">0.1</text>
<rect x="232.8" y="617.5" width="33.39999999999998" height="9.399999999999977" fill="#ffffff" stroke="#9a9a9a" stroke-width="1"/>
<text x="251.52" y="624.90" font-size="8.4" textLength="11.68" lengthAdjust="spacingAndGlyphs" stroke="#1c1c1c" stroke-width="0.06" fill="#1c1c1c">100</text>
<rect x="232.8" y="630.0" width="33.39999999999998" height="9.899999999999977" fill="#ffffff" stroke="#9a9a9a" stroke-width="1"/>
<text x="247.63" y="637.40" font-size="8.4" textLength="15.57" lengthAdjust="spacingAndGlyphs" stroke="#1c1c1c" stroke-width="0.06" fill="#1c1c1c">1000</text>
<rect x="136.8" y="654.4" width="51.7" height="11.4" fill="#e1e1e1" stroke="#8a8a8a" stroke-width="1"/>
<text x="138.80" y="663.80" font-size="9" textLength="47.50" lengthAdjust="spacingAndGlyphs" stroke="#000" stroke-width="0.06" fill="#000">Make Test Plans</text>
<rect x="285.8" y="546.3" width="413.2" height="105.20000000000005" rx="2" fill="none" stroke="#d0d0d0" stroke-width="1"/>
<rect x="287.6" y="542.8" width="91.4" height="6" fill="#f6f6f6"/>
<text x="289.60" y="549.00" font-size="8.4" textLength="87.40" lengthAdjust="spacingAndGlyphs" stroke="#1c1c1c" stroke-width="0.06" fill="#1c1c1c">Acceleration Model Settings</text>
<text x="289.20" y="560.90" font-size="8.4" textLength="103.00" lengthAdjust="spacingAndGlyphs" stroke="#1c1c1c" stroke-width="0.06" fill="#1c1c1c">Specify failure quantile estimates.</text>
<rect x="289.1" y="563.3" width="13.699999999999989" height="9" fill="#e4e4e4"/>
<rect x="303.5" y="563.3" width="31.19999999999999" height="9" fill="#e4e4e4"/>
<rect x="336" y="563.3" width="32.80000000000001" height="9" fill="#e4e4e4"/>
<rect x="369.5" y="563.3" width="43.19999999999999" height="9" fill="#e4e4e4"/>
<rect x="413.7" y="563.3" width="33.60000000000002" height="9" fill="#e4e4e4"/>
<rect x="303.5" y="572.5" width="31.2" height="21.5" fill="#e4e4e4"/>
<text x="341.00" y="571.00" font-size="8" font-weight="bold" textLength="25.00" lengthAdjust="spacingAndGlyphs" stroke="#000" stroke-width="0.15" fill="#000">X1 (°C)</text>
<text x="374.00" y="571.00" font-size="8" font-weight="bold" textLength="36.50" lengthAdjust="spacingAndGlyphs" stroke="#000" stroke-width="0.15" fill="#000">Probability</text>
<text x="429.00" y="571.00" font-size="8" font-weight="bold" textLength="16.00" lengthAdjust="spacingAndGlyphs" stroke="#000" stroke-width="0.15" fill="#000">Time</text>
<line x1="289.5" y1="578" x2="302" y2="578" stroke="#d64058" stroke-width="1.2"/>
<line x1="289.5" y1="589" x2="302" y2="589" stroke="#4f7fd8" stroke-width="1.2"/>
<text x="304.80" y="581.60" font-size="8.4" textLength="28.50" lengthAdjust="spacingAndGlyphs" stroke="#1c1c1c" stroke-width="0.06" fill="#1c1c1c">Setting 1</text>
<text x="304.80" y="592.20" font-size="8.4" textLength="28.50" lengthAdjust="spacingAndGlyphs" stroke="#1c1c1c" stroke-width="0.06" fill="#1c1c1c">Setting 2</text>
<rect x="336.5" y="573.2" width="31.80000000000001" height="9.5" fill="#ffffff" stroke="#9a9a9a" stroke-width="0.9"/>
<text x="341.30" y="581.60" font-size="8.4" textLength="25.30" lengthAdjust="spacingAndGlyphs" stroke="#1c1c1c" stroke-width="0.06" fill="#1c1c1c">90.0000</text>
<rect x="370.0" y="573.2" width="42.19999999999999" height="9.5" fill="#ffffff" stroke="#9a9a9a" stroke-width="0.9"/>
<text x="389.09" y="581.60" font-size="8.4" textLength="21.41" lengthAdjust="spacingAndGlyphs" stroke="#1c1c1c" stroke-width="0.06" fill="#1c1c1c">0.1000</text>
<rect x="414.2" y="573.2" width="32.60000000000002" height="9.5" fill="#ffffff" stroke="#9a9a9a" stroke-width="0.9"/>
<text x="419.80" y="581.60" font-size="8.4" textLength="25.30" lengthAdjust="spacingAndGlyphs" stroke="#1c1c1c" stroke-width="0.06" fill="#1c1c1c">97.7344</text>
<rect x="336.5" y="583.9" width="31.80000000000001" height="9.600000000000023" fill="#ffffff" stroke="#9a9a9a" stroke-width="0.9"/>
<text x="337.92" y="592.20" font-size="8.4" textLength="28.68" lengthAdjust="spacingAndGlyphs" stroke="#1c1c1c" stroke-width="0.06" fill="#1c1c1c">110.0000</text>
<rect x="370.0" y="583.9" width="42.19999999999999" height="9.600000000000023" fill="#ffffff" stroke="#9a9a9a" stroke-width="0.9"/>
<text x="389.09" y="592.20" font-size="8.4" textLength="21.41" lengthAdjust="spacingAndGlyphs" stroke="#1c1c1c" stroke-width="0.06" fill="#1c1c1c">0.1000</text>
<rect x="414.2" y="583.9" width="32.60000000000002" height="9.600000000000023" fill="#ffffff" stroke="#9a9a9a" stroke-width="0.9"/>
<text x="419.80" y="592.20" font-size="8.4" textLength="25.30" lengthAdjust="spacingAndGlyphs" stroke="#1c1c1c" stroke-width="0.06" fill="#1c1c1c">77.0652</text>
<text x="289.20" y="603.00" font-size="8.4" textLength="19.00" lengthAdjust="spacingAndGlyphs" stroke="#1c1c1c" stroke-width="0.06" fill="#1c1c1c">Sigma</text>
<rect x="309.3" y="596.7" width="41.5" height="9.299999999999955" fill="#ffffff" stroke="#9a9a9a" stroke-width="1"/>
<text x="343.91" y="603.60" font-size="8.4" textLength="3.89" lengthAdjust="spacingAndGlyphs" stroke="#1c1c1c" stroke-width="0.06" fill="#1c1c1c">1</text>
<rect x="479.2" y="558.5" width="209.3" height="59.0" fill="#ffffff" stroke="#b8b8b8" stroke-width="1"/>
<line x1="476" y1="560.5999999999999" x2="479.2" y2="560.5999999999999" stroke="#8a8a8a" stroke-width="0.9"/>
<text x="464.27" y="564.10" font-size="8.4" textLength="9.73" lengthAdjust="spacingAndGlyphs" stroke="#333" stroke-width="0.06" fill="#333">1.0</text>
<line x1="476" y1="571.54" x2="479.2" y2="571.54" stroke="#8a8a8a" stroke-width="0.9"/>
<text x="464.27" y="575.04" font-size="8.4" textLength="9.73" lengthAdjust="spacingAndGlyphs" stroke="#333" stroke-width="0.06" fill="#333">0.8</text>
<line x1="476" y1="582.4799999999999" x2="479.2" y2="582.4799999999999" stroke="#8a8a8a" stroke-width="0.9"/>
<text x="464.27" y="585.98" font-size="8.4" textLength="9.73" lengthAdjust="spacingAndGlyphs" stroke="#333" stroke-width="0.06" fill="#333">0.6</text>
<line x1="476" y1="593.42" x2="479.2" y2="593.42" stroke="#8a8a8a" stroke-width="0.9"/>
<text x="464.27" y="596.92" font-size="8.4" textLength="9.73" lengthAdjust="spacingAndGlyphs" stroke="#333" stroke-width="0.06" fill="#333">0.4</text>
<line x1="476" y1="604.3599999999999" x2="479.2" y2="604.3599999999999" stroke="#8a8a8a" stroke-width="0.9"/>
<text x="464.27" y="607.86" font-size="8.4" textLength="9.73" lengthAdjust="spacingAndGlyphs" stroke="#333" stroke-width="0.06" fill="#333">0.2</text>
<line x1="476" y1="615.3" x2="479.2" y2="615.3" stroke="#8a8a8a" stroke-width="0.9"/>
<text x="470.11" y="618.80" font-size="8.4" textLength="3.89" lengthAdjust="spacingAndGlyphs" stroke="#333" stroke-width="0.06" fill="#333">0</text>
<line x1="486.7" y1="617.5" x2="486.7" y2="620.5" stroke="#8a8a8a" stroke-width="0.9"/>
<text x="484.75" y="629.90" font-size="8.4" textLength="3.89" lengthAdjust="spacingAndGlyphs" stroke="#333" stroke-width="0.06" fill="#333">0</text>
<line x1="506.44" y1="617.5" x2="506.44" y2="619.5" stroke="#8a8a8a" stroke-width="0.9"/>
<line x1="526.18" y1="617.5" x2="526.18" y2="620.5" stroke="#8a8a8a" stroke-width="0.9"/>
<text x="522.29" y="629.90" font-size="8.4" textLength="7.79" lengthAdjust="spacingAndGlyphs" stroke="#333" stroke-width="0.06" fill="#333">20</text>
<line x1="545.92" y1="617.5" x2="545.92" y2="619.5" stroke="#8a8a8a" stroke-width="0.9"/>
<line x1="565.66" y1="617.5" x2="565.66" y2="620.5" stroke="#8a8a8a" stroke-width="0.9"/>
<text x="561.77" y="629.90" font-size="8.4" textLength="7.79" lengthAdjust="spacingAndGlyphs" stroke="#333" stroke-width="0.06" fill="#333">40</text>
<line x1="585.4" y1="617.5" x2="585.4" y2="619.5" stroke="#8a8a8a" stroke-width="0.9"/>
<line x1="605.14" y1="617.5" x2="605.14" y2="620.5" stroke="#8a8a8a" stroke-width="0.9"/>
<text x="601.25" y="629.90" font-size="8.4" textLength="7.79" lengthAdjust="spacingAndGlyphs" stroke="#333" stroke-width="0.06" fill="#333">60</text>
<line x1="624.88" y1="617.5" x2="624.88" y2="619.5" stroke="#8a8a8a" stroke-width="0.9"/>
<line x1="644.62" y1="617.5" x2="644.62" y2="620.5" stroke="#8a8a8a" stroke-width="0.9"/>
<text x="640.73" y="629.90" font-size="8.4" textLength="7.79" lengthAdjust="spacingAndGlyphs" stroke="#333" stroke-width="0.06" fill="#333">80</text>
<line x1="664.36" y1="617.5" x2="664.36" y2="619.5" stroke="#8a8a8a" stroke-width="0.9"/>
<line x1="684.1" y1="617.5" x2="684.1" y2="620.5" stroke="#8a8a8a" stroke-width="0.9"/>
<text x="678.26" y="629.90" font-size="8.4" textLength="11.68" lengthAdjust="spacingAndGlyphs" stroke="#333" stroke-width="0.06" fill="#333">100</text>
<text x="574.00" y="639.80" font-size="8.4" textLength="16.00" lengthAdjust="spacingAndGlyphs" stroke="#333" stroke-width="0.06" fill="#333">Time</text>
<text x="441.75" y="587.30" font-size="8.5" textLength="35.50" lengthAdjust="spacingAndGlyphs" transform="rotate(-90 459.50 587.30)" fill="#333">Probability</text>
<polyline points="479.6,615.3 481.6,615.3 483.7,615.3 485.7,615.3 487.7,615.3 489.8,615.3 491.8,615.3 493.8,615.3 495.9,615.3 497.9,615.3 499.9,615.3 502.0,615.3 504.0,615.3 506.0,615.3 508.1,615.3 510.1,615.3 512.1,615.3 514.2,615.3 516.2,615.3 518.2,615.2 520.3,615.2 522.3,615.2 524.3,615.2 526.4,615.2 528.4,615.2 530.4,615.1 532.5,615.1 534.5,615.1 536.5,615.1 538.6,615.0 540.6,615.0 542.6,615.0 544.7,614.9 546.7,614.9 548.7,614.9 550.8,614.8 552.8,614.8 554.8,614.7 556.9,614.7 558.9,614.7 560.9,614.6 563.0,614.6 565.0,614.5 567.0,614.5 569.1,614.4 571.1,614.3 573.1,614.3 575.2,614.2 577.2,614.2 579.2,614.1 581.3,614.0 583.3,614.0 585.3,613.9 587.4,613.8 589.4,613.8 591.4,613.7 593.5,613.6 595.5,613.6 597.5,613.5 599.6,613.4 601.6,613.3 603.6,613.3 605.7,613.2 607.7,613.1 609.7,613.0 611.8,612.9 613.8,612.9 615.8,612.8 617.9,612.7 619.9,612.6 621.9,612.5 624.0,612.4 626.0,612.3 628.0,612.3 630.1,612.2 632.1,612.1 634.1,612.0 636.2,611.9 638.2,611.8 640.2,611.7 642.3,611.6 644.3,611.5 646.3,611.4 648.4,611.3 650.4,611.2 652.4,611.2 654.5,611.1 656.5,611.0 658.5,610.9 660.6,610.8 662.6,610.7 664.6,610.6 666.6,610.5 668.7,610.4 670.7,610.3 672.7,610.2 674.8,610.1 676.8,610.0 678.8,609.9 680.9,609.8 682.9,609.7 684.9,609.6 687.0,609.5" fill="none" stroke="#d64058" stroke-width="1"/>
<polyline points="479.6,615.3 481.6,615.3 483.7,615.3 485.7,615.3 487.7,615.3 489.8,615.3 491.8,615.3 493.8,615.3 495.9,615.3 497.9,615.3 499.9,615.3 502.0,615.3 504.0,615.3 506.0,615.3 508.1,615.3 510.1,615.3 512.1,615.2 514.2,615.2 516.2,615.2 518.2,615.2 520.3,615.2 522.3,615.1 524.3,615.1 526.4,615.1 528.4,615.0 530.4,615.0 532.5,614.9 534.5,614.9 536.5,614.8 538.6,614.8 540.6,614.7 542.6,614.7 544.7,614.6 546.7,614.6 548.7,614.5 550.8,614.4 552.8,614.4 554.8,614.3 556.9,614.2 558.9,614.1 560.9,614.1 563.0,614.0 565.0,613.9 567.0,613.8 569.1,613.7 571.1,613.6 573.1,613.5 575.2,613.4 577.2,613.3 579.2,613.2 581.3,613.1 583.3,613.0 585.3,612.9 587.4,612.8 589.4,612.7 591.4,612.6 593.5,612.5 595.5,612.4 597.5,612.3 599.6,612.2 601.6,612.1 603.6,612.0 605.7,611.8 607.7,611.7 609.7,611.6 611.8,611.5 613.8,611.4 615.8,611.2 617.9,611.1 619.9,611.0 621.9,610.9 624.0,610.8 626.0,610.6 628.0,610.5 630.1,610.4 632.1,610.3 634.1,610.1 636.2,610.0 638.2,609.9 640.2,609.7 642.3,609.6 644.3,609.5 646.3,609.4 648.4,609.2 650.4,609.1 652.4,609.0 654.5,608.8 656.5,608.7 658.5,608.6 660.6,608.4 662.6,608.3 664.6,608.2 666.6,608.0 668.7,607.9 670.7,607.8 672.7,607.6 674.8,607.5 676.8,607.4 678.8,607.2 680.9,607.1 682.9,607.0 684.9,606.8 687.0,606.7" fill="none" stroke="#4f7fd8" stroke-width="1"/>
<rect x="637.3267048" y="608.3299999999999" width="3" height="3" fill="none" stroke="#222" stroke-width="0.9"/>
<rect x="678.1277056" y="608.3299999999999" width="3" height="3" fill="none" stroke="#222" stroke-width="0.9"/>
<line x1="102" y1="676.3" x2="707" y2="676.3" stroke="#aab3d6" stroke-width="1.2"/>
<rect x="102" y="677" width="605" height="10.5" fill="#dfe5f0"/>
<line x1="646" y1="677" x2="646" y2="687.5" stroke="#c4cbd8" stroke-width="1"/>
<line x1="659.3" y1="677" x2="659.3" y2="687.5" stroke="#c4cbd8" stroke-width="1"/>
<circle cx="652.4" cy="682.3" r="3" fill="#d83b3b"/>
<path d="M650.9,680.8 L653.9,683.8 M653.9,680.8 L650.9,683.8" stroke="#fff" stroke-width="0.9"/>
<path d="M662.5,683 L666.2,679.3 L670,683" fill="none" stroke="#2a8ad8" stroke-width="1.2"/>
<rect x="665" y="682.5" width="2.5" height="3.5" fill="#e0a030"/>
<rect x="677.2" y="678.5" width="8.2" height="8" fill="#ffffff" stroke="#8a8a8a" stroke-width="0.8"/>
<path d="M689,681 L694,681 L691.5,684 Z" fill="#111"/>
</svg></body></html>
